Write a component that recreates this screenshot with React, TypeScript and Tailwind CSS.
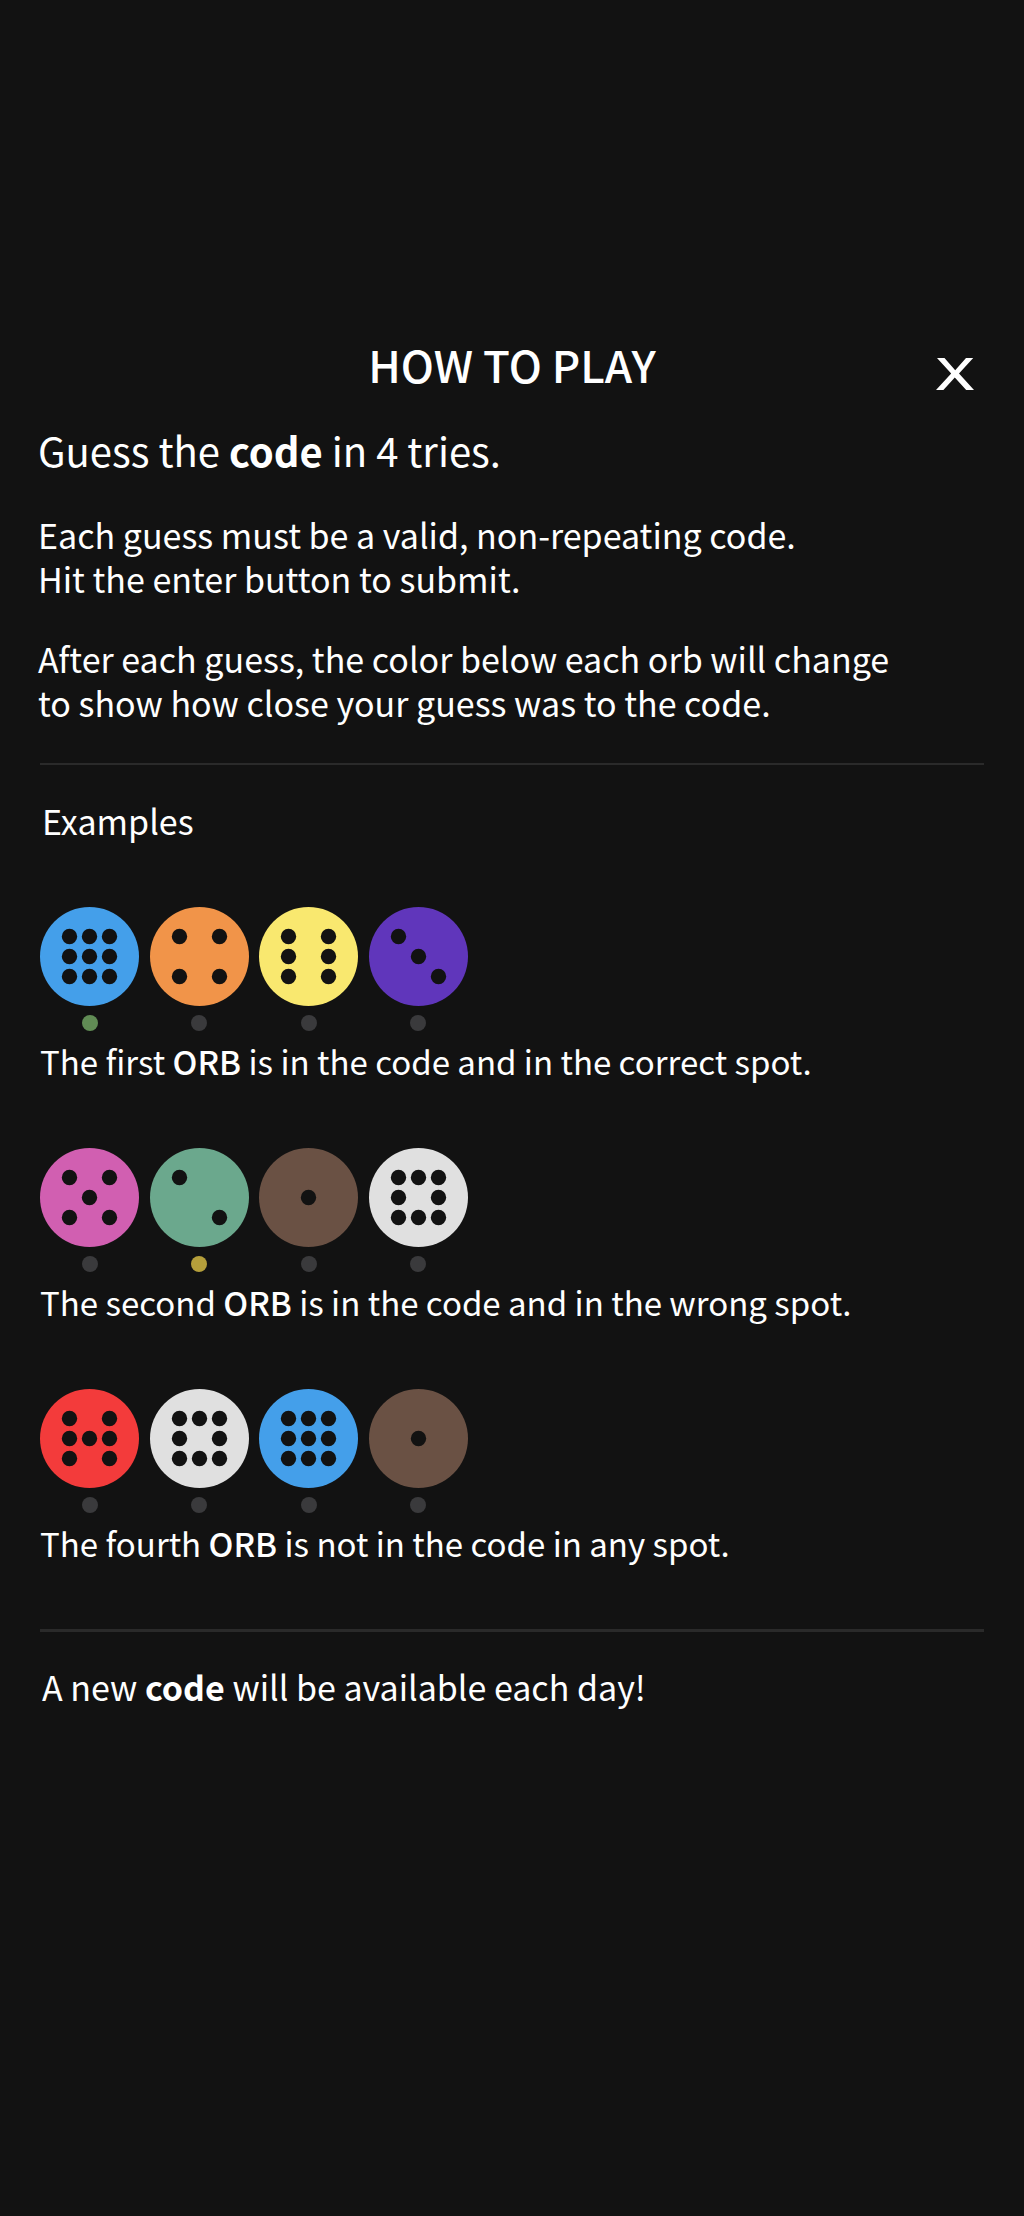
type Status = "correct" | "misplaced" | "absent";

const ORBS = {
  blue: { label: "Blue orb", fill: "#449fea", pips: [0, 1, 2, 3, 4, 5, 6, 7, 8] },
  orange: { label: "Orange orb", fill: "#f19449", pips: [0, 2, 6, 8] },
  yellow: { label: "Yellow orb", fill: "#f9e86f", pips: [0, 2, 3, 5, 6, 8] },
  purple: { label: "Purple orb", fill: "#6036bb", pips: [0, 4, 8] },
  pink: { label: "Pink orb", fill: "#d15fb1", pips: [0, 2, 4, 6, 8] },
  green: { label: "Green orb", fill: "#6ba88d", pips: [0, 8] },
  brown: { label: "Brown orb", fill: "#6a5144", pips: [4] },
  white: { label: "White orb", fill: "#e0e0e0", pips: [0, 1, 2, 3, 5, 6, 7, 8] },
  red: { label: "Red orb", fill: "#f33b3b", pips: [0, 2, 3, 4, 5, 6, 8] },
};

type OrbName = keyof typeof ORBS;

const STATUS_CLASS: Record<Status, string> = {
  correct: "bg-[#618c55]",
  misplaced: "bg-[#b59f3b]",
  absent: "bg-[#3a3a3c]",
};

const EXAMPLES: { orbs: [OrbName, Status][]; position: string; result: string }[] = [
  {
    orbs: [["blue", "correct"], ["orange", "absent"], ["yellow", "absent"], ["purple", "absent"]],
    position: "first",
    result: "is in the code and in the correct spot.",
  },
  {
    orbs: [["pink", "absent"], ["green", "misplaced"], ["brown", "absent"], ["white", "absent"]],
    position: "second",
    result: "is in the code and in the wrong spot.",
  },
  {
    orbs: [["red", "absent"], ["white", "absent"], ["blue", "absent"], ["brown", "absent"]],
    position: "fourth",
    result: "is not in the code in any spot.",
  },
];

function Orb({ name, status }: { name: OrbName; status: Status }) {
  const orb = ORBS[name];
  return (
    <li className="flex flex-col items-center gap-[9px]">
      <svg viewBox="0 0 99 99" className="size-[99px]" role="img" aria-label={orb.label}>
        <circle cx="49.5" cy="49.5" r="49.5" fill={orb.fill} />
        {orb.pips.map((p) => (
          <circle key={p} cx={29.5 + (p % 3) * 20} cy={29.5 + Math.floor(p / 3) * 20} r="7.7" fill="#121212" />
        ))}
      </svg>
      <span className={`size-4 rounded-full ${STATUS_CLASS[status]}`} />
    </li>
  );
}

export default function App() {
  return (
    <main className="min-h-screen bg-[#121212] px-10 pt-84 pb-20 font-['Noto_Sans_CJK_SC','Noto_Sans',sans-serif] text-[34px]/[44px] text-white">
      <header className="grid grid-cols-[1fr_auto_1fr] items-center">
        <h1 className="col-start-2 text-[44px]/[56px] font-medium">HOW TO PLAY</h1>
        <button type="button" aria-label="Close" className="mt-5 mr-2.5 justify-self-end">
          <svg viewBox="0 0 38 32" className="h-8 w-[38px]" fill="#fff">
            <path d="M1 0H8.5L19.2 12.2L30 0H37.2L23 15.6L38 32H30.2L18.8 19.4L7.4 32H0L15.2 15.6Z" />
          </svg>
        </button>
      </header>
      <section className="-ml-0.5">
        <p className="mt-7 text-[40px]/[60px]">
          Guess the <strong className="font-bold">code</strong> in 4 tries.
        </p>
        <p className="mt-[33px]">
          Each guess must be a valid, non-repeating code.
          <br />
          Hit the enter button to submit.
        </p>
        <p className="mt-9">
          After each guess, the color below each orb will change
          <br />
          to show how close your guess was to the code.
        </p>
      </section>
      <hr className="mt-[38px] border-t-2 border-[#2a2a2a]" />
      <h2 className="mt-[34px] ml-0.5">Examples</h2>
      <div className="mt-16 flex flex-col gap-[65px]">
        {EXAMPLES.map((ex) => (
          <section key={ex.position}>
            <ul className="flex w-[428px] justify-between">
              {ex.orbs.map(([name, status]) => (
                <Orb key={name} name={name} status={status} />
              ))}
            </ul>
            <p className="mt-2 text-[33px]/[44px]">
              The {ex.position} <strong className="font-medium">ORB</strong> {ex.result}
            </p>
          </section>
        ))}
      </div>
      <hr className="mt-16 border-t-3 border-[#2a2a2a]" />
      <p className="mt-[33px] ml-0.5">
        A new <strong className="font-bold">code</strong> will be available each day!
      </p>
    </main>
  );
}
